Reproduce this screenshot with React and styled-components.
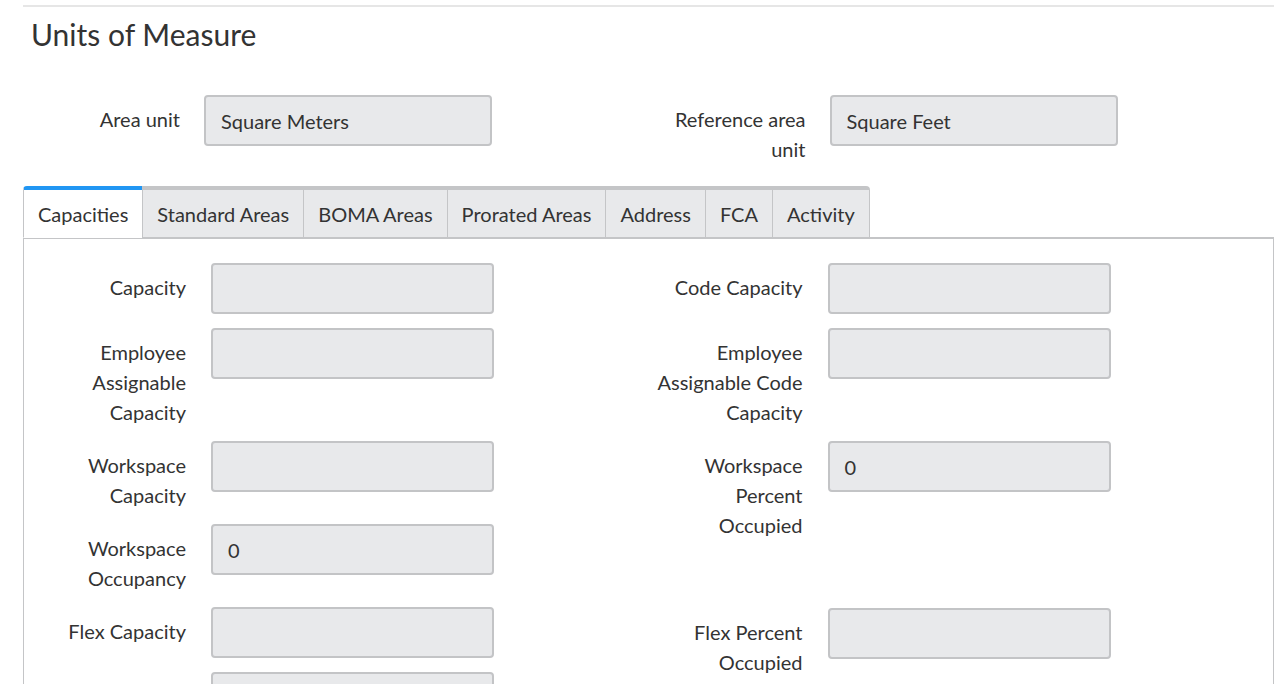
import styled, { createGlobalStyle } from "styled-components";

const GlobalStyle = createGlobalStyle`
    body {
        margin: 0;
        background: #ffffff;
        font-family: Lato, "Open Sans", sans-serif;
        color: #333333;
    }
`;

const Page = styled.main`
    padding: 0 6px 0 23px;
    overflow: hidden;
    height: 684px;
`;

const Section = styled.section`
    border-top: 2px solid #e6e6e6;
    margin-top: 5px;
`;

const Title = styled.h2`
    margin: 0;
    padding: 9px 0 0 8px;
    font-size: 30px;
    font-weight: 400;
    line-height: 36px;
    color: #333;
`;

const UnitsRow = styled.div`
    display: grid;
    grid-template-columns: 1fr 1fr;
    margin-top: 43px;
    margin-bottom: 22px;
`;

const Field = styled.div`
    display: flex;
    align-items: flex-start;
    gap: ${(p) => p.$gap || 25}px;
    min-height: ${(p) => p.$minHeight || 0}px;
`;

const Label = styled.label`
    box-sizing: border-box;
    width: ${(p) => p.$width || 154}px;
    padding-left: ${(p) => p.$inset || 0}px;
    flex-shrink: 0;
    text-align: right;
    font-size: 20px;
    line-height: 30px;
    padding-top: 9px;
    color: #333;
`;

const Input = styled.div`
    box-sizing: border-box;
    width: ${(p) => p.$width || 283}px;
    height: 51px;
    flex-shrink: 0;
    background: #e8e9eb;
    border: 2px solid #c3c4c6;
    border-radius: 4px;
    padding: 0 15px;
    display: flex;
    align-items: center;
    font-size: 20px;
    color: #333;
`;

const Tabs = styled.div`
    display: flex;
    width: fit-content;
`;

const Tab = styled.div`
    box-sizing: border-box;
    height: 52px;
    padding: 0 14px;
    display: flex;
    align-items: center;
    font-size: 20px;
    color: #333;
    white-space: nowrap;
    background: ${(p) => (p.$active ? "#ffffff" : "#e8e9eb")};
    border-top: 4px solid ${(p) => (p.$active ? "#2196f3" : "#c4c5c7")};
    border-left: 1px solid #c4c5c7;
    border-bottom: ${(p) => (p.$active ? "1px solid #ffffff" : "1px solid #c4c5c7")};
    margin-bottom: -1px;
    position: relative;
    z-index: 1;
    &:first-child {
        border-top-left-radius: 4px;
    }
    &:last-child {
        border-right: 1px solid #c4c5c7;
        border-top-right-radius: 4px;
    }
`;

const Panel = styled.div`
    border: 1px solid #c4c5c7;
    border-top-width: 2px;
    border-bottom: none;
    padding: 24px 8px 0;
    display: grid;
    grid-template-columns: 1fr 1fr;
    height: 500px;
`;

const Column = styled.div`
    display: flex;
    flex-direction: column;
    gap: 14px;
`;

const leftFields = [
    { label: "Capacity", value: "" },
    { label: "Employee Assignable Capacity", value: "" },
    { label: "Workspace Capacity", value: "" },
    { label: "Workspace Occupancy", value: "0" },
    { label: "Flex Capacity", value: "" },
    { label: "", value: "" },
];

const rightFields = [
    { label: "Code Capacity", value: "" },
    { label: "Employee Assignable Code Capacity", value: "" },
    { label: "Workspace Percent Occupied", value: "0", minHeight: 153 },
    { label: "Flex Percent Occupied", value: "" },
];

const tabs = ["Capacities", "Standard Areas", "BOMA Areas", "Prorated Areas", "Address", "FCA", "Activity"];

const App = () => {
    return (
        <Page>
            <GlobalStyle />
            <Section>
                <Title>Units of Measure</Title>
                <UnitsRow>
                    <Field $gap={24}>
                        <Label $width={157}>Area unit</Label>
                        <Input $width={288}>Square Meters</Input>
                    </Field>
                    <Field $gap={24}>
                        <Label $width={157}>Reference area unit</Label>
                        <Input $width={288}>Square Feet</Input>
                    </Field>
                </UnitsRow>
                <Tabs>
                    {tabs.map((tab, index) => (
                        <Tab key={tab} $active={index === 0}>{tab}</Tab>
                    ))}
                </Tabs>
                <Panel>
                    <Column>
                        {leftFields.map((f, i) => (
                            <Field key={i}>
                                <Label $inset={6}>{f.label}</Label>
                                <Input>{f.value}</Input>
                            </Field>
                        ))}
                    </Column>
                    <Column>
                        {rightFields.map((f, i) => (
                            <Field key={i} $minHeight={f.minHeight}>
                                <Label $inset={6}>{f.label}</Label>
                                <Input>{f.value}</Input>
                            </Field>
                        ))}
                    </Column>
                </Panel>
            </Section>
        </Page>
    );
};

export default App;
